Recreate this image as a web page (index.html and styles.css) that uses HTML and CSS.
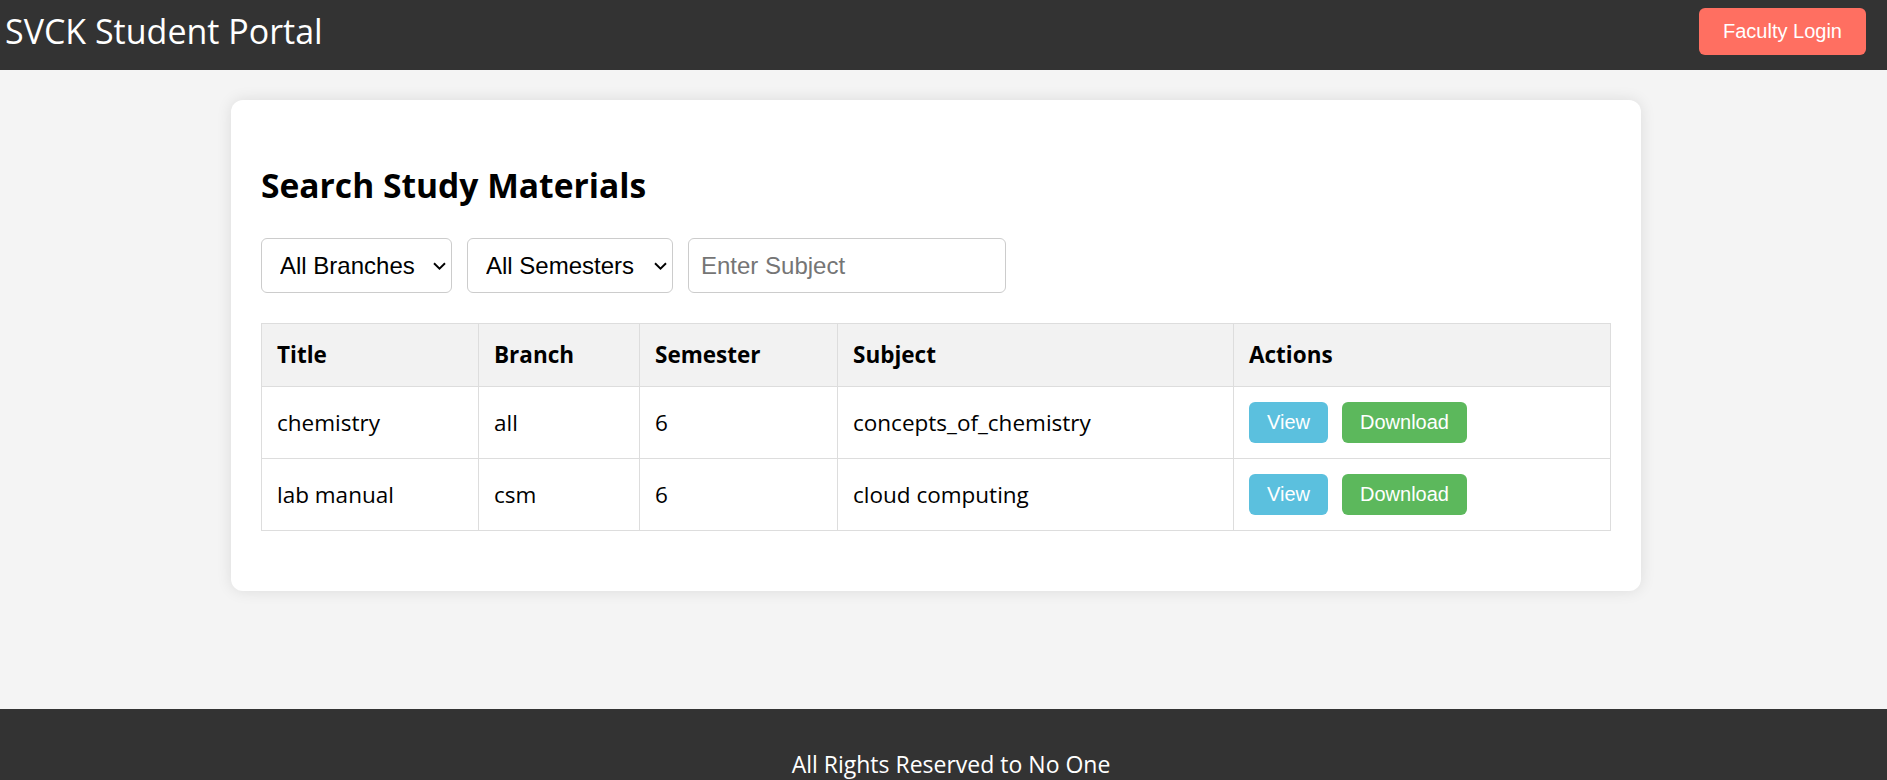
FILE: index.html
```html
<!DOCTYPE html>
<html lang="en">
<head>
<meta charset="utf-8">
<title>SVCK Student Portal</title>
<link rel="stylesheet" href="styles.css">
</head>
<body>
<header class="topbar">
  <h1 class="brand">SVCK Student Portal</h1>
  <button class="login-btn">Faculty Login</button>
</header>
<main class="main">
  <section class="card">
    <h2 class="card-title">Search Study Materials</h2>
    <div class="filters">
      <span class="select-wrap">
        <select class="field field-branch">
          <option>All Branches</option>
        </select>
        <svg class="chevron" width="13" height="8" viewBox="0 0 13 8"><path d="M1 1.2 L6.5 6.6 L12 1.2" fill="none" stroke="#000" stroke-width="1.9"/></svg>
      </span>
      <span class="select-wrap">
        <select class="field field-sem">
          <option>All Semesters</option>
        </select>
        <svg class="chevron" width="13" height="8" viewBox="0 0 13 8"><path d="M1 1.2 L6.5 6.6 L12 1.2" fill="none" stroke="#000" stroke-width="1.9"/></svg>
      </span>
      <input class="field field-subject" type="text" placeholder="Enter Subject">
    </div>
    <table class="materials">
      <colgroup>
        <col class="c-title">
        <col class="c-branch">
        <col class="c-sem">
        <col class="c-subject">
        <col class="c-actions">
      </colgroup>
      <thead>
        <tr><th>Title</th><th>Branch</th><th>Semester</th><th>Subject</th><th>Actions</th></tr>
      </thead>
      <tbody>
        <tr>
          <td>chemistry</td><td>all</td><td>6</td><td>concepts_of_chemistry</td>
          <td><div class="actions"><button class="btn btn-view">View</button><button class="btn btn-dl">Download</button></div></td>
        </tr>
        <tr>
          <td>lab manual</td><td>csm</td><td>6</td><td>cloud computing</td>
          <td><div class="actions"><button class="btn btn-view">View</button><button class="btn btn-dl">Download</button></div></td>
        </tr>
      </tbody>
    </table>
  </section>
</main>
<footer class="footer">
  <p class="footer-text">All Rights Reserved to No One</p>
</footer>
</body>
</html>
```
FILE: styles.css
```css
html, body {
  margin: 0;
  padding: 0;
}
body {
  background: #f4f4f4;
  font-family: "Open Sans", "Noto Sans", sans-serif;
  font-size: 22.5px;
  line-height: 32px;
  color: #000;
  overflow: hidden;
}
.topbar {
  height: 70px;
  box-sizing: border-box;
  background: #333;
  color: #fff;
  display: flex;
  justify-content: space-between;
  align-items: flex-start;
  padding: 7px 21px 0 5px;
}
.brand {
  margin: 0;
  font-size: 34px;
  font-weight: 400;
  line-height: 48px;
}
.login-btn {
  margin-top: 1px;
  background: #ff6f61;
  color: #fff;
  border: none;
  border-radius: 6px;
  font-family: "Liberation Sans", Arial, sans-serif;
  font-size: 20px;
  line-height: 23px;
  padding: 12px 24px;
}
.main {
  min-height: 639px;
  box-sizing: border-box;
  padding: 30px 15px 0 0;
}
.card {
  width: 1410px;
  box-sizing: border-box;
  margin: 0 auto;
  background: #fff;
  border-radius: 12px;
  padding: 30px;
  box-shadow: 0 0 15px rgba(0, 0, 0, 0.1);
}
.card-title {
  margin: 31px 0 29px;
  font-size: 33.6px;
  line-height: 48px;
  font-weight: 700;
}
.filters {
  display: flex;
  gap: 15px;
  margin-bottom: 30px;
}
.select-wrap {
  position: relative;
  display: block;
}
.chevron {
  position: absolute;
  right: 6px;
  top: 24px;
  pointer-events: none;
}
.field {
  display: block;
  box-sizing: border-box;
  height: 55px;
  border: 1px solid #ccc;
  border-radius: 6px;
  background: #fff;
  font-family: "Liberation Sans", Arial, sans-serif;
  font-size: 24px;
  color: #000;
  padding: 0 12px;
  margin: 0;
}
select.field {
  appearance: none;
  -webkit-appearance: none;
  padding-left: 18px;
}
.field-branch { width: 191px; }
.field-sem { width: 206px; }
.field-subject { width: 318px; }
.field::placeholder { color: #757575; }
.materials {
  width: 100%;
  border-collapse: collapse;
  table-layout: fixed;
  margin-bottom: 30px;
}
.c-title { width: 217px; }
.c-branch { width: 161px; }
.c-sem { width: 198px; }
.c-subject { width: 396px; }
.materials th,
.materials td {
  border: 1px solid #ddd;
  padding: 15px;
  text-align: left;
  vertical-align: middle;
}
.materials th {
  background: #f2f2f2;
  font-weight: 700;
}
.actions {
  display: flex;
  gap: 14px;
}
.btn {
  border: none;
  border-radius: 6px;
  color: #fff;
  font-family: "Liberation Sans", Arial, sans-serif;
  font-size: 20px;
  line-height: 23px;
  padding: 9px 18px;
}
.btn-view { background: #5bc0de; }
.btn-dl { background: #5cb85c; }
.footer {
  background: #333;
  color: #fff;
  text-align: center;
  padding: 15px 0 15px 15px;
}
.footer-text {
  margin: 24px 0;
  font-size: 23px;
  line-height: 32px;
}
```
